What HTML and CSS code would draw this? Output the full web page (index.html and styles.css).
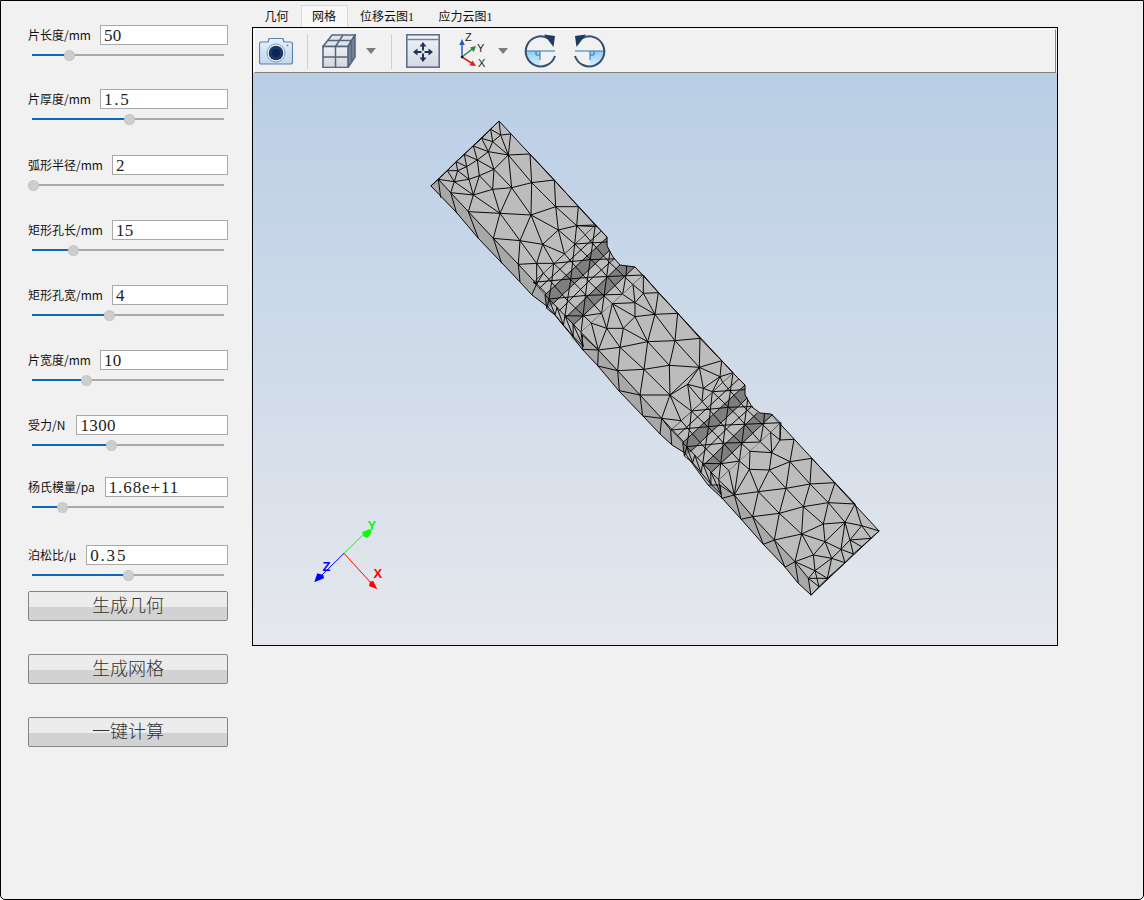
FILE: index.html
```html
<!DOCTYPE html>
<html lang="zh">
<head>
<meta charset="utf-8">
<title>网格</title>
<link rel="stylesheet" href="styles.css">
</head>
<body>
<div class="window">
  <aside class="sidebar">
    <div class="field"><div class="row"><span class="label">片长度/mm</span><div class="input">50</div></div><div class="slider"><div class="fill" style="width:19.3%"></div><div class="thumb" style="left:19.3%"></div></div></div>
    <div class="field"><div class="row"><span class="label">片厚度/mm</span><div class="input dec">1.5</div></div><div class="slider"><div class="fill" style="width:50.5%"></div><div class="thumb" style="left:50.5%"></div></div></div>
    <div class="field"><div class="row"><span class="label">弧形半径/mm</span><div class="input">2</div></div><div class="slider"><div class="fill" style="width:0.5%"></div><div class="thumb" style="left:0.5%"></div></div></div>
    <div class="field"><div class="row"><span class="label">矩形孔长/mm</span><div class="input">15</div></div><div class="slider"><div class="fill" style="width:21.4%"></div><div class="thumb" style="left:21.4%"></div></div></div>
    <div class="field"><div class="row"><span class="label">矩形孔宽/mm</span><div class="input">4</div></div><div class="slider"><div class="fill" style="width:40%"></div><div class="thumb" style="left:40%"></div></div></div>
    <div class="field"><div class="row"><span class="label">片宽度/mm</span><div class="input">10</div></div><div class="slider"><div class="fill" style="width:28%"></div><div class="thumb" style="left:28%"></div></div></div>
    <div class="field"><div class="row"><span class="label">受力/N</span><div class="input">1300</div></div><div class="slider"><div class="fill" style="width:41%"></div><div class="thumb" style="left:41%"></div></div></div>
    <div class="field"><div class="row"><span class="label">杨氏模量/pa</span><div class="input dec-long">1.68e+11</div></div><div class="slider"><div class="fill" style="width:15.6%"></div><div class="thumb" style="left:15.6%"></div></div></div>
    <div class="field"><div class="row"><span class="label">泊松比/μ</span><div class="input dec">0.35</div></div><div class="slider"><div class="fill" style="width:50%"></div><div class="thumb" style="left:50%"></div></div></div>
    <button class="btn">生成几何</button>
    <button class="btn">生成网格</button>
    <button class="btn">一键计算</button>
  </aside>
  <main class="main">
    <nav class="tabs">
      <span class="tab">几何</span>
      <span class="tab active">网格</span>
      <span class="tab">位移云图1</span>
      <span class="tab">应力云图1</span>
    </nav>
    <section class="viewer">
      <div class="toolbar">
        <svg class="ic camera" width="34" height="28" viewBox="0 0 34 28">
          <defs><linearGradient id="camBody" x1="0" y1="0" x2="0" y2="1"><stop offset="0" stop-color="#e6f0fa"/><stop offset="1" stop-color="#c3d7ee"/></linearGradient></defs>
          <path d="M9 5L10 1.500H24L25 5H31.500Q33.500 5 33.500 7V25Q33.500 27 31.500 27H2.500Q.5 27 .5 25V7Q.5 5 2.500 5Z" fill="url(#camBody)" stroke="#5d82a8" stroke-width="1.200"/>
          <circle cx="17" cy="16" r="9" fill="#f3f7fb" stroke="#7d99b8"/>
          <circle cx="17" cy="16" r="7.300" fill="#1b3768"/>
          <circle cx="17" cy="16" r="4" fill="#0f2350"/>
          <circle cx="28.500" cy="8.500" r="1" fill="#6f8fae"/>
        </svg>
        <span class="sep first"></span>
        <svg class="ic cube" width="34" height="34" viewBox="0 0 34 34">
          <defs><linearGradient id="paneFill" x1="0" y1="0" x2="0" y2="1"><stop offset="0" stop-color="#eef0f2"/><stop offset="1" stop-color="#d3d7dc"/></linearGradient></defs>
          <path d="M1 12.500L10 1H33L26 12.500Z" fill="#dfe4ea" stroke="#55667f" stroke-width="1.600"/>
          <path d="M26 12.500L33 1V23L26 33.500Z" fill="#76869f" stroke="#55667f" stroke-width="1.600"/>
          <rect x="1" y="12.500" width="25" height="21" fill="url(#paneFill)" stroke="#55667f" stroke-width="1.600"/>
          <path d="M13.500 12.500V33.500M1 23H26M13.500 12.500L21 1M6 6.500H29.500M29.500 6.500V28" fill="none" stroke="#55667f" stroke-width="1.500"/>
        </svg>
        <svg class="caret" width="10" height="6" viewBox="0 0 10 6"><path d="M0 0H10L5 6Z" fill="#7c7c7c"/></svg>
        <span class="sep second"></span>
        <svg class="ic fit" width="34" height="34" viewBox="0 0 34 34">
          <defs><linearGradient id="fitBody" x1="0" y1="0" x2="0" y2="1"><stop offset="0" stop-color="#f1f3f7"/><stop offset="1" stop-color="#d3d8e2"/></linearGradient></defs>
          <rect x=".8" y=".8" width="32.400" height="32.400" fill="url(#fitBody)" stroke="#5c7190" stroke-width="1.600"/>
          <path d="M1 5.500H33" stroke="#6f829e" stroke-width="1.300"/>
          <path d="M17 8L20.500 12.500H18V16.500H16V12.500H13.500ZM17 28L13.500 23.500H16V19.500H18V23.500H20.500ZM7 18L11.500 14.500V17H15.500V19H11.500V21.500ZM27 18L22.500 21.500V19H18.500V17H22.500V14.500Z" fill="#1f3556"/>
        </svg>
        <svg class="ic axes" width="30" height="40" viewBox="0 -2 30 40">
          <path d="M4 24V10" stroke="#1f5fc0" stroke-width="1.500"/><path d="M4 6L6.800 12H1.200Z" fill="#1f5fc0"/>
          <path d="M4 24L15 15.500" stroke="#1f8a3e" stroke-width="1.500"/><path d="M18 13L15.800 19L12 14.600Z" fill="#1f8a3e"/>
          <path d="M4 24L15 31" stroke="#e02020" stroke-width="1.500"/><path d="M18 33L11.500 32.500L14.500 27.500Z" fill="#e02020"/>
          <circle cx="4" cy="24" r="1.300" fill="#111"/>
          <text x="7" y="8" class="axtext">Z</text><text x="19" y="19" class="axtext">Y</text><text x="20" y="34" class="axtext">X</text>
        </svg>
        <svg class="caret after-axes" width="10" height="6" viewBox="0 0 10 6"><path d="M0 0H10L5 6Z" fill="#7c7c7c"/></svg>
        <svg class="ic rot first-rot" width="33" height="34" viewBox="0 0 33 34">
          <defs><linearGradient id="rotFill" x1="0" y1="0" x2="0" y2="1"><stop offset="0" stop-color="#8fcbf2"/><stop offset="1" stop-color="#d8effc"/></linearGradient></defs>
          <path d="M1 17H16V32A15 15 0 0 1 1 17Z" fill="url(#rotFill)"/>
          <path d="M1 17H31M16 17V26M12 17V21H16" fill="none" stroke="#2f77ad" stroke-width="1"/>
          <path d="M31 22A15 15 0 1 1 24 4.300" fill="none" stroke="#34506f" stroke-width="2"/>
          <path d="M20 .5L31 2L29.500 13Z" fill="#1d3a5f"/>
        </svg>
        <svg class="ic rot second-rot" width="33" height="34" viewBox="0 0 33 34">
          <path d="M1 17H16V32A15 15 0 0 1 1 17Z" fill="url(#rotFill)"/>
          <path d="M1 17H31M16 17V26M12 17V21H16" fill="none" stroke="#2f77ad" stroke-width="1"/>
          <path d="M31 22A15 15 0 1 1 24 4.300" fill="none" stroke="#34506f" stroke-width="2"/>
          <path d="M20 .5L31 2L29.500 13Z" fill="#1d3a5f"/>
        </svg>
      </div>
      <svg class="scene" width="804" height="572" viewBox="253 73 804 572">
        <defs>
          <linearGradient id="sky" x1="0" y1="0" x2="0" y2="1"><stop offset="0" stop-color="#b9cee5"/><stop offset="1" stop-color="#e6e8ed"/></linearGradient>
          <clipPath id="notchClip"><polygon points="9,157 196,-15 232,22 232,48 250,80 270,105 315,110 340,135 153,307 105,280 75,250 45,235 45,195"/></clipPath>
          <g id="notch" transform="translate(530 230) scale(.33333)">
            <g clip-path="url(#notchClip)">
              <polygon class="strip" points="45,195 232,22 250,50 68,222 50,235"/>
              <polygon class="strip" points="108,262 285,90 315,110 130,285"/>
              <path class="edge" d="M9 157L100 75L196 -15M27 176L125 85L214 3M45 195L232 22M68 222L250 50M88 242L180 150L265 75M108 262L285 90M130 285L315 110M153 307L243 225L340 135M9 157L153 307M40 129L108 207L184 279M71 100L146 172L215 250M103 71L171 149L247 221M134 42L209 114L278 193M165 14L233 92L309 164M196 -15L340 135M105 257L160 258L215 250M57 207L170 196L278 193M9 157L175 142L340 135M71 100L180 89L292 85M134 42L244 35M71 100L66 150L57 207M134 42L122 150L105 257M196 -15L172 150L153 307M244 35L230 140L215 250M292 85L288 135L278 193"/>
            </g>
            <path class="edge" d="M45 195L50 235L75 255L100 285L130 320L160 350M57 207L50 235M57 207L75 255M81 232L75 255M81 232L100 285M105 257L100 285M105 257L130 320M129 282L130 320M129 282L160 350M153 307L160 350"/>
          </g>
        </defs>
        <rect x="253" y="73" width="804" height="572" fill="url(#sky)"/>
        <polygon class="face" points="499,121 607,237 607,246 613,257 620,265 635,267 735,375 745,385 745,395 752,407 760,413 771,414 879,531 811,595 798,583 785,567 763,544 741,519 722,498 708,485 692,463 685,453 672,445 660,434 643,416 619,391 598,366 582,349 573,337 563,325 555,315 548,307 532,295 520,282 502,263 478,238 457,213 431,186"/>
        <g transform="translate(420 110) scale(.33333)">
          <polygon class="side" points="32,228 55,208 92,248 145,305 220,385 295,463 350,522 378,550 385,590 335,555 300,515 245,460 175,385 110,310"/>
          <path class="edge" d="M237 33L212 58M212 58L242 75M242 75L237 33M242 75L272 72M212 58L185 85M185 85L218 95M218 95L242 75M218 95L212 58M218 95L265 135M242 75L265 135M272 72L265 135M185 85L160 108M160 108L205 125M205 125L218 95M205 125L265 135M205 125L185 85M160 108L133 133M133 133L172 150M172 150L160 108M172 150L205 125M172 150L222 178M205 125L222 178M222 178L265 135M133 133L108 155M108 155L140 170M140 170L133 133M140 170L172 150M108 155L82 182M82 182L113 182M113 182L108 155M113 182L140 170M82 182L55 208M55 208L103 215M103 215L82 182M103 215L113 182M140 170L147 208M147 208L178 197M172 150L178 197M178 197L222 178M147 208L113 182M147 208L103 215M147 208L160 255M178 197L160 255M103 215L92 248M92 248L55 208M92 248L160 255M103 215L160 255M160 255L218 238M178 197L218 238M222 178L218 238M218 238L275 233M222 178L275 233M265 135L275 233M265 135L335 218M275 233L335 218M330 132L335 218M265 135L330 132M335 218L403 210M330 132L403 210M92 248L145 305M160 255L145 305M160 255L240 310M218 238L240 310M275 233L240 310M145 305L240 310M275 233L333 315M240 310L333 315M335 218L333 315M335 218L407 290M333 315L407 290M403 210L407 290M407 290L475 290M403 210L475 290M145 305L220 385M240 310L220 385M240 310L300 392M220 385L300 392M333 315L300 392M333 315L368 403M300 392L368 403M333 315L415 360M407 290L415 360M415 360L368 403M415 360L470 347M407 290L470 347M475 290L470 347M475 290L530 350M470 347L530 350M220 385L295 463M300 392L295 463M300 392L350 460M295 463L350 460M368 403L350 460M55 208L62 263M92 248L110 310M145 305L175 385M220 385L245 460M295 463L300 515M350 522L335 555M378 550L385 590M295 463L350 522M350 522L339 517M350 522L370 489M350 522L350 460M350 460L370 489M350 460L401 460M368 403L401 460M368 403L433 431M415 360L433 431M415 360L464 402M470 347L464 402M470 347L495 374M470 347L526 345M350 522L378 550M32 228L55 208"/>
        </g>
        <g transform="translate(570 280) scale(.33333)">
          <polygon class="side" points="0,170 37,165 85,210 143,272 210,345 275,415 302,450 345,490 345,520 305,495 270,462 218,408 148,332 83,258 37,208"/>
          <path class="edge" d="M220 40L265 38M265 38L323 100M265 38L255 103M220 40L255 103M195 68L255 103M220 40L195 68M255 103L323 100M255 103L315 182M323 100L315 182M323 100L390 175M315 182L390 175M255 103L233 185M195 110L255 103M195 110L233 185M160 145L195 110M160 145L233 185M315 182L233 185M233 185L150 202M160 145L150 202M150 202L85 210M110 145L150 202M110 145L160 145M233 185L298 256M315 182L298 256M315 182L388 262M390 175L388 262M390 175L455 242M388 262L455 242M298 256L388 262M222 268L298 256M222 268L233 185M222 268L150 202M143 272L150 202M143 272L222 268M143 272L85 210M143 272L210 345M222 268L210 345M222 268L300 345M298 256L300 345M210 345L300 345M388 262L300 345M388 262L353 313M388 262L400 325M388 262L450 290M455 242L450 290M353 313L300 345M353 313L400 325M400 325L450 290M210 345L275 415M300 345L275 415M33 157L85 210M64 129L85 210M64 129L110 145M85 210L110 145M95 100L110 145M127 71L110 145M127 71L160 145M127 71L195 110M127 71L195 68M158 43L195 68M189 14L195 68M189 14L220 40M220 -15L220 40M220 -15L265 38M195 68L195 110M85 210L37 165M85 210L83 258M37 165L37 208M143 272L148 332M210 345L218 408M275 415L270 462M37 208L85 210M83 258L143 272M148 332L210 345M218 408L275 415M275 415L302 450M275 415L333 422M300 345L333 422M300 345L364 393M353 313L364 393M353 313L396 364M400 325L396 364M400 325L427 335M450 290L427 335M450 290L458 307M450 290L489 278M455 242L489 278M275 415L345 490M302 450L305 495M345 490L345 520"/>
        </g>
        <g transform="translate(640 360) scale(.33333)">
          <polygon class="side" points="205,375 240,375 283,405 338,470 403,540 465,605 505,655 513,706 475,668 435,622 370,553 303,478 245,415"/>
          <path class="edge" d="M462 238L420 240M420 190L420 240M420 240L395 278M462 238L450 305M395 278L450 305M450 305L515 295M388 330L450 305M388 330L395 278M328 328L388 330M328 328L355 395M388 330L355 395M388 330L438 385M450 305L438 385M450 305L510 372M515 295L510 372M510 372L585 368M515 295L585 368M355 395L438 385M438 385L510 372M283 405L355 395M283 405L328 328M355 395L338 470M355 395L418 460M438 385L418 460M438 385L490 440M510 372L490 440M510 372L565 428M585 368L565 428M585 368L645 432M565 428L645 432M490 440L565 428M418 460L490 440M338 470L418 460M283 405L338 470M338 470L403 540M418 460L403 540M418 460L485 522M490 440L485 522M490 440L550 492M565 428L550 492M565 428L615 487M645 432L615 487M645 432L665 497M615 487L665 497M665 497L718 513M550 492L615 487M485 522L550 492M403 540L485 522M403 540L465 605M485 522L465 605M485 522L520 585M485 522L555 545M550 492L555 545M555 545L520 585M465 605L520 585M555 545L603 568M615 487L603 568M615 487L630 540M630 540L603 568M615 487L555 545M665 497L630 540M665 497L693 535M693 535L630 540M718 513L693 535M693 535L665 560M630 540L665 560M603 568L640 582M665 560L640 582M630 540L640 582M520 585L575 595M603 568L575 595M555 545L575 595M575 595L615 608M640 582L615 608M603 568L615 608M520 585L525 632M575 595L525 632M465 605L525 632M525 632L562 655M575 595L562 655M615 608L562 655M465 605L505 655M525 632L505 655M505 655L562 655M505 655L513 706M505 655L537 680M562 655L537 680M513 706L537 680M525 632L537 680M240 375L245 415M283 405L303 478M338 470L370 553M403 540L435 622M465 605L475 668M240 375L205 375M283 405L245 415M338 470L303 478M403 540L370 553M465 605L435 622M236 360L283 405M267 332L283 405M298 303L283 405M298 303L328 328M330 274L328 328M330 274L395 278M361 246L395 278M392 217L395 278M392 217L420 240M423 188L420 240M240 375L283 405"/>
        </g>
        <use href="#notch"/>
        <use href="#notch" x="137.700" y="147.700"/>
        <polygon class="outline" points="499,121 607,237 607,246 613,257 620,265 635,267 735,375 745,385 745,395 752,407 760,413 771,414 879,531 811,595 798,583 785,567 763,544 741,519 722,498 708,485 692,463 685,453 672,445 660,434 643,416 619,391 598,366 582,349 573,337 563,325 555,315 548,307 532,295 520,282 502,263 478,238 457,213 431,186"/>
        <g class="triad">
          <path d="M344 553.300L364 534" stroke="#00ff00"/><polygon points="362,532.300 370,529 371.700,531.700 367.700,537.700 364,536.700" fill="#00ff00"/>
          <path d="M344 553.300L322 575" stroke="#0000ff"/><polygon points="314.300,582.300 317.300,573.300 323.300,575 324,578.300" fill="#0000ff"/>
          <path d="M344 553.300L371 583" stroke="#ff0000"/><polygon points="377.300,589.300 369,586 370,581.700 373.300,581" fill="#ff0000"/>
          <text x="367.500" y="529.500" fill="#00ff00">Y</text>
          <text x="322.500" y="571" fill="#0000ff">Z</text>
          <text x="373.500" y="578" fill="#ff0000">X</text>
        </g>
      </svg>
    </section>
  </main>
</div>
</body>
</html>
```
FILE: styles.css
```css
* { box-sizing: border-box; }
html, body { margin: 0; padding: 0; }
body { font-family: "Noto Sans CJK SC", "Liberation Sans", sans-serif; }
.window {
  width: 1144px; height: 900px; display: flex; background: #f1f1f1;
  border: 1px solid #000; border-radius: 0 0 5px 5px; overflow: hidden;
}
.sidebar { width: 200px; margin-left: 27px; padding-top: 24px; flex: none; display: flex; flex-direction: column; }
.field { margin-bottom: 34px; }
.field:nth-child(1) { margin-bottom: 33px; }
.field:nth-child(2) { margin-bottom: 35px; }
.field:nth-child(7) { margin-bottom: 31px; }
.field:nth-child(8) { margin-bottom: 37px; }
.field:nth-child(9) { margin-bottom: 15px; }
.row { display: flex; align-items: center; height: 20px; }
.label { flex: none; font-size: 12px; line-height: 20px; color: #111; margin-right: 9px; white-space: nowrap; }
.field:nth-child(7) .label { margin-right: 11px; }
.field:nth-child(8) .label, .field:nth-child(9) .label { margin-right: 10px; }
.input {
  flex: 1; min-width: 0; height: 20px; background: #fff; border: 1px solid #a8a8a8;
  font: 17px/19px "Liberation Serif", "Noto Sans CJK SC", serif; letter-spacing: .4px; color: #222; padding-left: 3px;
}
.input.dec { letter-spacing: 1.8px; }
.input.dec-long { letter-spacing: .9px; }
.slider { position: relative; height: 2px; margin: 9px 4px 0; background: #a9a9a9; }
.fill { height: 100%; background: #0f67b8; }
.thumb {
  position: absolute; top: 50%; width: 11px; height: 11px; margin: -5.5px 0 0 -5px;
  border-radius: 50%; background: #cdcdcd; border: 1px dotted #bdbdbd;
}
.btn {
  width: 200px; height: 30px; margin: 0 0 33px; padding: 0 0 4px; border: 1px solid #858585; border-radius: 2px;
  background: linear-gradient(#ececec 0 52%, #d2d2d2 52% 100%);
  font: 300 18px/24px "Noto Sans CJK SC", sans-serif; color: #333;
}
.main { margin-left: 24px; padding-top: 4px; flex: none; width: 806px; }
.tabs { display: flex; height: 22px; }
.tab { padding: 0 12px 0 12.5px; font: 12px/25px "Liberation Serif", "Noto Sans CJK SC", serif; color: #111; white-space: nowrap; }
.tab.active { background: #f8f8f8; border: 1px solid #d9d9d9; border-bottom: 0; padding: 0 10.5px; line-height: 23px; }
.viewer { width: 806px; height: 619px; border: 1px solid #000; background: #f1f1f1; }
.toolbar {
  height: 44px; margin: 1px 1px 0; display: flex; align-items: center; padding-left: 4px;
  background: #f1f1f1; border-top: 1px solid #fff; border-left: 1px solid #fff;
  border-right: 1px solid #808080; border-bottom: 1px solid #808080;
}
.sep { width: 1px; height: 35px; background: #cfcfcf; flex: none; }
.sep.first { margin-left: 14px; }
.sep.second { margin-left: 15px; }
.ic, .caret { flex: none; display: block; }
.cube { margin-left: 14px; }
.caret { margin-left: 10px; }
.fit { margin-left: 14px; }
.axes { margin-left: 18px; }
.first-rot { margin-left: 16px; }
.second-rot { margin-left: 16px; transform: scaleX(-1); }
.axtext { font: 11px "Liberation Sans", sans-serif; fill: #222; }
.scene { display: block; }
.face { fill: #bcbcbc; }
.side { fill: #a8a8a8; }
.strip { fill: #7f7f7f; }
.edge { fill: none; stroke: #0a0a0a; stroke-width: 1; vector-effect: non-scaling-stroke; }
.outline { fill: none; stroke: #0a0a0a; stroke-width: 1; }
.triad path { stroke-width: 1; fill: none; }
.triad text { font: bold 13px "Liberation Sans", sans-serif; }
```
